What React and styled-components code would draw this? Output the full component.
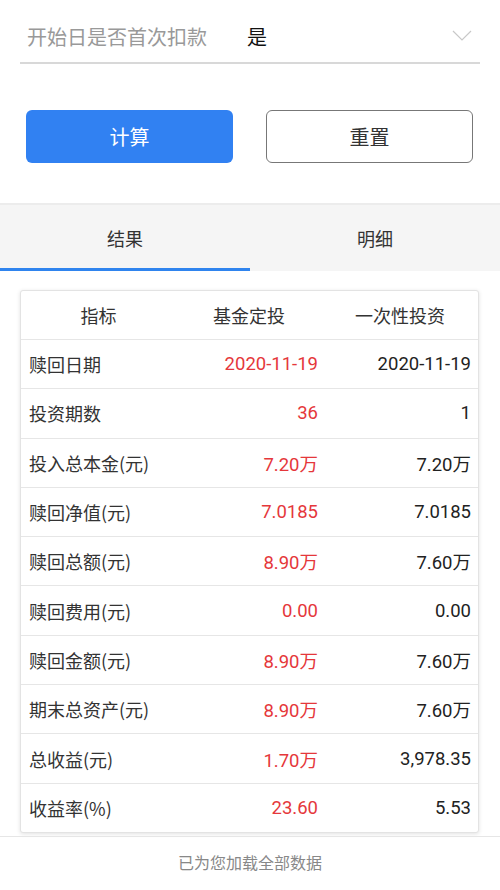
import styled, { createGlobalStyle } from "styled-components";

const Global = createGlobalStyle`
  body {
    margin: 0;
    background: #fff;
    font-family: "Noto Sans CJK SC", "Noto Sans", sans-serif;
  }
  * { box-sizing: border-box; }
`;

const Page = styled.div`
  width: 500px;
  height: 890px;
  overflow: hidden;
  display: flex;
  flex-direction: column;
  background: #fff;
`;

const Field = styled.div`
  margin: 10px 20px 0;
  height: 54px;
  display: flex;
  align-items: center;
  border-bottom: 2px solid #d8d8d8;
  padding-left: 7px;
  padding-right: 8px;
`;

const FieldLabel = styled.span`
  width: 220px;
  font-size: 20px;
  color: #999;
`;

const FieldValue = styled.span`
  flex: 1;
  font-size: 20px;
  color: #111;
`;

const Buttons = styled.div`
  display: flex;
  justify-content: space-between;
  padding: 46px 27px 0 26px;
`;

const Button = styled.button`
  width: 207px;
  height: 53px;
  border-radius: 6px;
  font-family: inherit;
  font-size: 20px;
  border: ${(p) => (p.primary ? "none" : "1.5px solid #777")};
  background: ${(p) => (p.primary ? "#3181f2" : "#fff")};
  color: ${(p) => (p.primary ? "#fff" : "#333")};
`;

const Tabs = styled.div`
  margin-top: 40px;
  display: flex;
  background: #f5f5f5;
  border-top: 2px solid #ececec;
  height: 68px;
`;

const Tab = styled.div`
  flex: 1;
  display: flex;
  align-items: center;
  justify-content: center;
  padding-top: 2px;
  font-size: 18px;
  color: #333;
  border-bottom: 3px solid ${(p) => (p.active ? "#2f84ee" : "transparent")};
`;

const Card = styled.div`
  margin: 19px 21px 0 20px;
  border: 1px solid #e3e3e3;
  border-radius: 3px;
  box-shadow: 0 1px 4px rgba(0, 0, 0, 0.12);
  background: #fff;
`;

const Row = styled.div`
  display: grid;
  grid-template-columns: 155px 146px 1fr;
  height: ${(p) => (p.first ? "48px" : "49.3px")};
  align-items: center;
  font-size: 18px;
  border-top: ${(p) => (p.first ? "none" : "1.5px solid #e6e6e6")};
`;

const HeadCell = styled.div`
  text-align: center;
  color: #333;
`;

const Label = styled.div`
  padding-left: 8px;
  color: #333;
`;

const Value = styled.div`
  text-align: right;
  padding-right: ${(p) => (p.red ? "4px" : "7px")};
  color: ${(p) => (p.red ? "#e5373b" : "#222")};
  font-family: "Roboto", "Noto Sans CJK SC", sans-serif;
  font-size: 18.5px;
`;

const Footer = styled.div`
  margin-top: 3px;
  border-top: 1.5px solid #e6e6e6;
  height: 52px;
  display: flex;
  align-items: center;
  justify-content: center;
  font-size: 16px;
  color: #888;
`;

const rows = [
  ["赎回日期", "2020-11-19", "2020-11-19"],
  ["投资期数", "36", "1"],
  ["投入总本金(元)", "7.20万", "7.20万"],
  ["赎回净值(元)", "7.0185", "7.0185"],
  ["赎回总额(元)", "8.90万", "7.60万"],
  ["赎回费用(元)", "0.00", "0.00"],
  ["赎回金额(元)", "8.90万", "7.60万"],
  ["期末总资产(元)", "8.90万", "7.60万"],
  ["总收益(元)", "1.70万", "3,978.35"],
  ["收益率(%)", "23.60", "5.53"],
];

export default function App() {
  return (
    <Page>
      <Global />
      <Field>
        <FieldLabel>开始日是否首次扣款</FieldLabel>
        <FieldValue>是</FieldValue>
        <svg width="20" height="12" viewBox="0 0 20 12">
          <path d="M1 1 L10 10 L19 1" fill="none" stroke="#c8c8c8" strokeWidth="1.2" />
        </svg>
      </Field>
      <Buttons>
        <Button primary>计算</Button>
        <Button>重置</Button>
      </Buttons>
      <Tabs>
        <Tab active>结果</Tab>
        <Tab>明细</Tab>
      </Tabs>
      <Card>
        <Row first>
          <HeadCell>指标</HeadCell>
          <HeadCell>基金定投</HeadCell>
          <HeadCell>一次性投资</HeadCell>
        </Row>
        {rows.map(([label, a, b]) => (
          <Row key={label}>
            <Label>{label}</Label>
            <Value red>{a}</Value>
            <Value>{b}</Value>
          </Row>
        ))}
      </Card>
      <Footer>已为您加载全部数据</Footer>
    </Page>
  );
}
